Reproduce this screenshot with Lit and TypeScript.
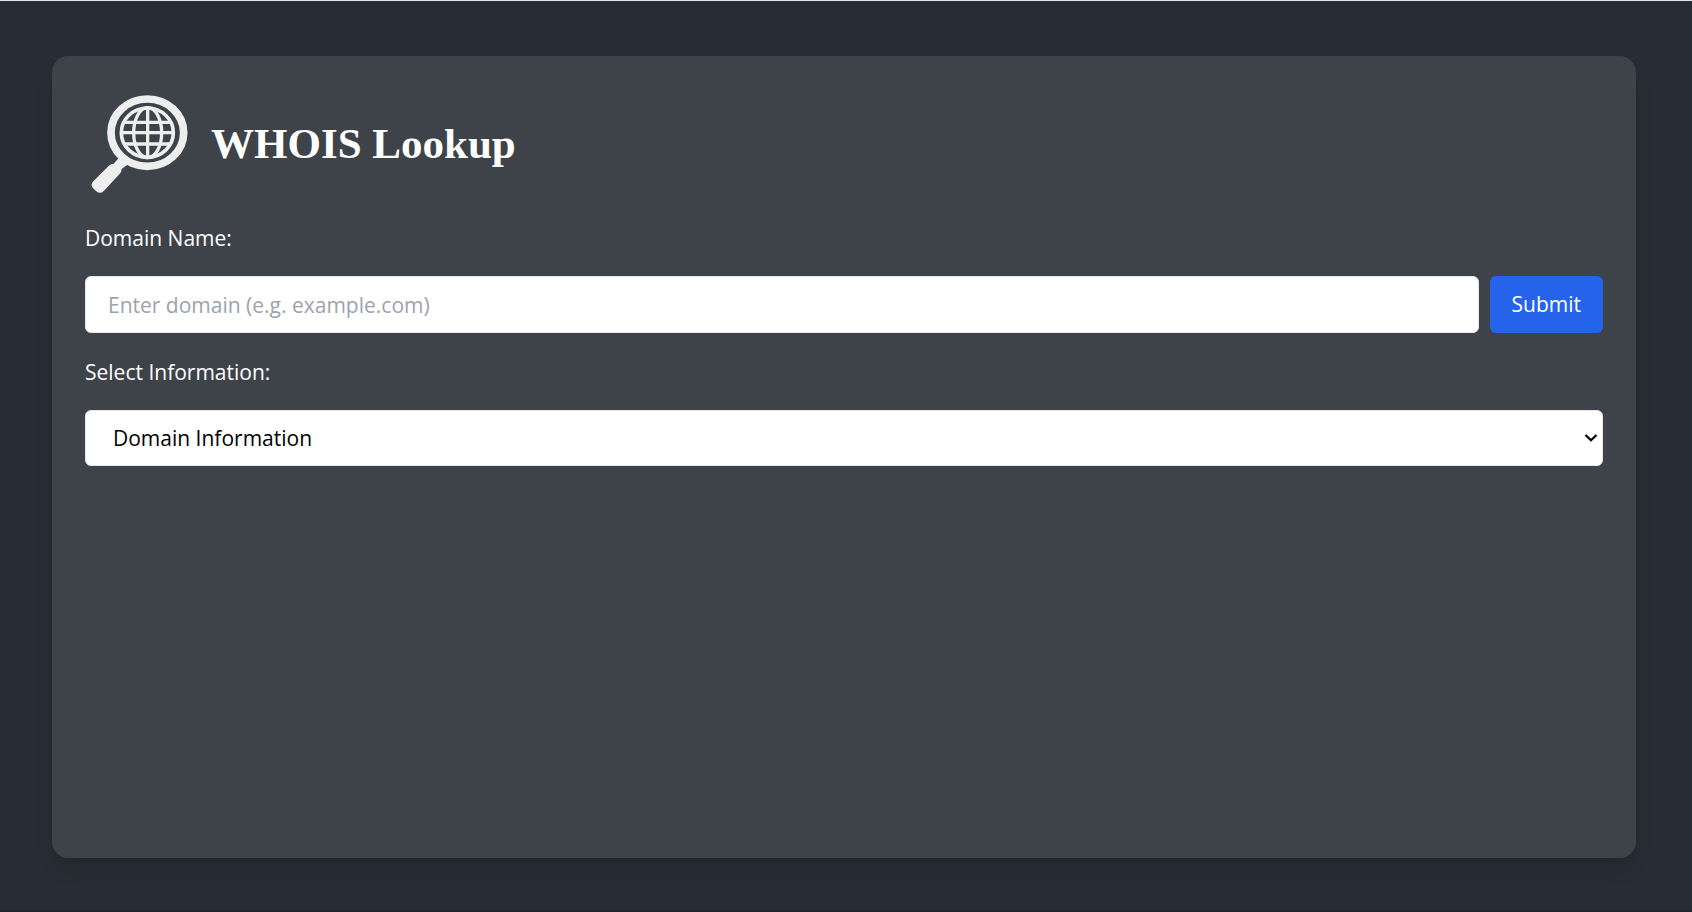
import { LitElement, html, css } from "lit";
import { customElement, state } from "lit/decorators.js";

const SECTIONS = [
  "Domain Information",
  "Contact Information",
];

@customElement("app-root")
export class AppRoot extends LitElement {
  @state() private domain = "";
  @state() private section = SECTIONS[0];

  static styles = css`
    :host {
      display: block;
      font-family: "Segoe UI", "Open Sans", sans-serif;
      font-size: 21px;
      line-height: 33px;
      color: #ffffff;
    }
    *,
    *::before,
    *::after {
      box-sizing: border-box;
    }
    .page {
      display: flex;
      min-height: 100vh;
      padding: 55px 56px 52px 52px;
      background: #282c34;
      border-top: 1px solid #e6e1ee;
      border-bottom: 2px solid #23262e;
    }
    .card {
      flex: 1;
      min-width: 0;
      padding: 33px;
      background: #3e434a;
      border-radius: 16px;
      box-shadow: 0 14px 21px -4px rgba(0, 0, 0, 0.1),
        0 6px 8px -6px rgba(0, 0, 0, 0.1);
    }
    .header {
      display: flex;
      align-items: center;
      gap: 16px;
      margin-bottom: 23px;
    }
    .logo {
      display: block;
      flex: none;
      width: 110px;
      height: 110px;
    }
    .title {
      margin: 0;
      font-family: "Liberation Serif", serif;
      font-size: 43px;
      line-height: 50px;
      font-weight: 700;
    }
    .form {
      display: grid;
      gap: 23px;
    }
    .field {
      display: grid;
      gap: 21px;
    }
    .row {
      display: flex;
      gap: 11px;
    }
    .control {
      height: 57px;
      margin: 0;
      border: 1px solid #e5e7eb;
      border-radius: 6px;
      background: #ffffff;
      color: #000000;
      font: inherit;
    }
    .text {
      flex: 1;
      min-width: 0;
      padding: 0 22px;
    }
    .text::placeholder {
      color: #9ca3af;
      opacity: 1;
    }
    .submit {
      height: 57px;
      padding: 0 22px;
      border: 0;
      border-radius: 6px;
      background: #2563eb;
      color: #ffffff;
      font: inherit;
      cursor: pointer;
    }
    .picker {
      display: grid;
      align-items: center;
    }
    .select {
      grid-area: 1 / 1;
      width: 100%;
      height: 56px;
      padding: 0 27px;
      appearance: none;
    }
    .chevron {
      grid-area: 1 / 1;
      justify-self: end;
      width: 14px;
      height: 10px;
      margin-right: 5px;
      pointer-events: none;
    }
  `;

  private onDomain(e: Event) {
    this.domain = (e.target as HTMLInputElement).value;
  }

  private onSection(e: Event) {
    this.section = (e.target as HTMLSelectElement).value;
  }

  render() {
    return html`
      <main class="page">
        <section class="card">
          <header class="header">
            <svg class="logo" viewBox="15 12 330 330" fill="none" aria-hidden="true">
              <path
                fill="#eeeeee"
                d="M116 219 L144 238 L125 252 Q125 262 118 268 L72 317 Q61 329 49 319 L39 310 Q30 300 40 289 L88 241 Q93 236 101 236 Z"
              />
              <g stroke="#eeeeee">
                <ellipse cx="202" cy="143" rx="109" ry="101" stroke-width="23" />
                <ellipse cx="202" cy="143" rx="78" ry="74" stroke-width="11" />
                <ellipse cx="203" cy="143" rx="42" ry="75" stroke-width="10" />
                <path stroke-width="10" d="M203 66V220M124 143H281M134 112H271M134 177H271" />
              </g>
            </svg>
            <h1 class="title">WHOIS Lookup</h1>
          </header>
          <form class="form" @submit=${(e: Event) => e.preventDefault()}>
            <div class="field">
              <label for="domain">Domain Name:</label>
              <div class="row">
                <input
                  id="domain"
                  class="control text"
                  type="text"
                  placeholder="Enter domain (e.g. example.com)"
                  .value=${this.domain}
                  @input=${this.onDomain}
                />
                <button class="submit" type="submit">Submit</button>
              </div>
            </div>
            <div class="field">
              <label for="section">Select Information:</label>
              <div class="picker">
                <select id="section" class="control select" @change=${this.onSection}>
                  ${SECTIONS.map(
                    (s) => html`<option value=${s} ?selected=${s === this.section}>${s}</option>`
                  )}
                </select>
                <svg class="chevron" viewBox="0 0 14 10" fill="none" aria-hidden="true">
                  <path d="M1.500 2L7 7.200L12.500 2" stroke="#000000" stroke-width="2.200" />
                </svg>
              </div>
            </div>
          </form>
        </section>
      </main>
    `;
  }
}
